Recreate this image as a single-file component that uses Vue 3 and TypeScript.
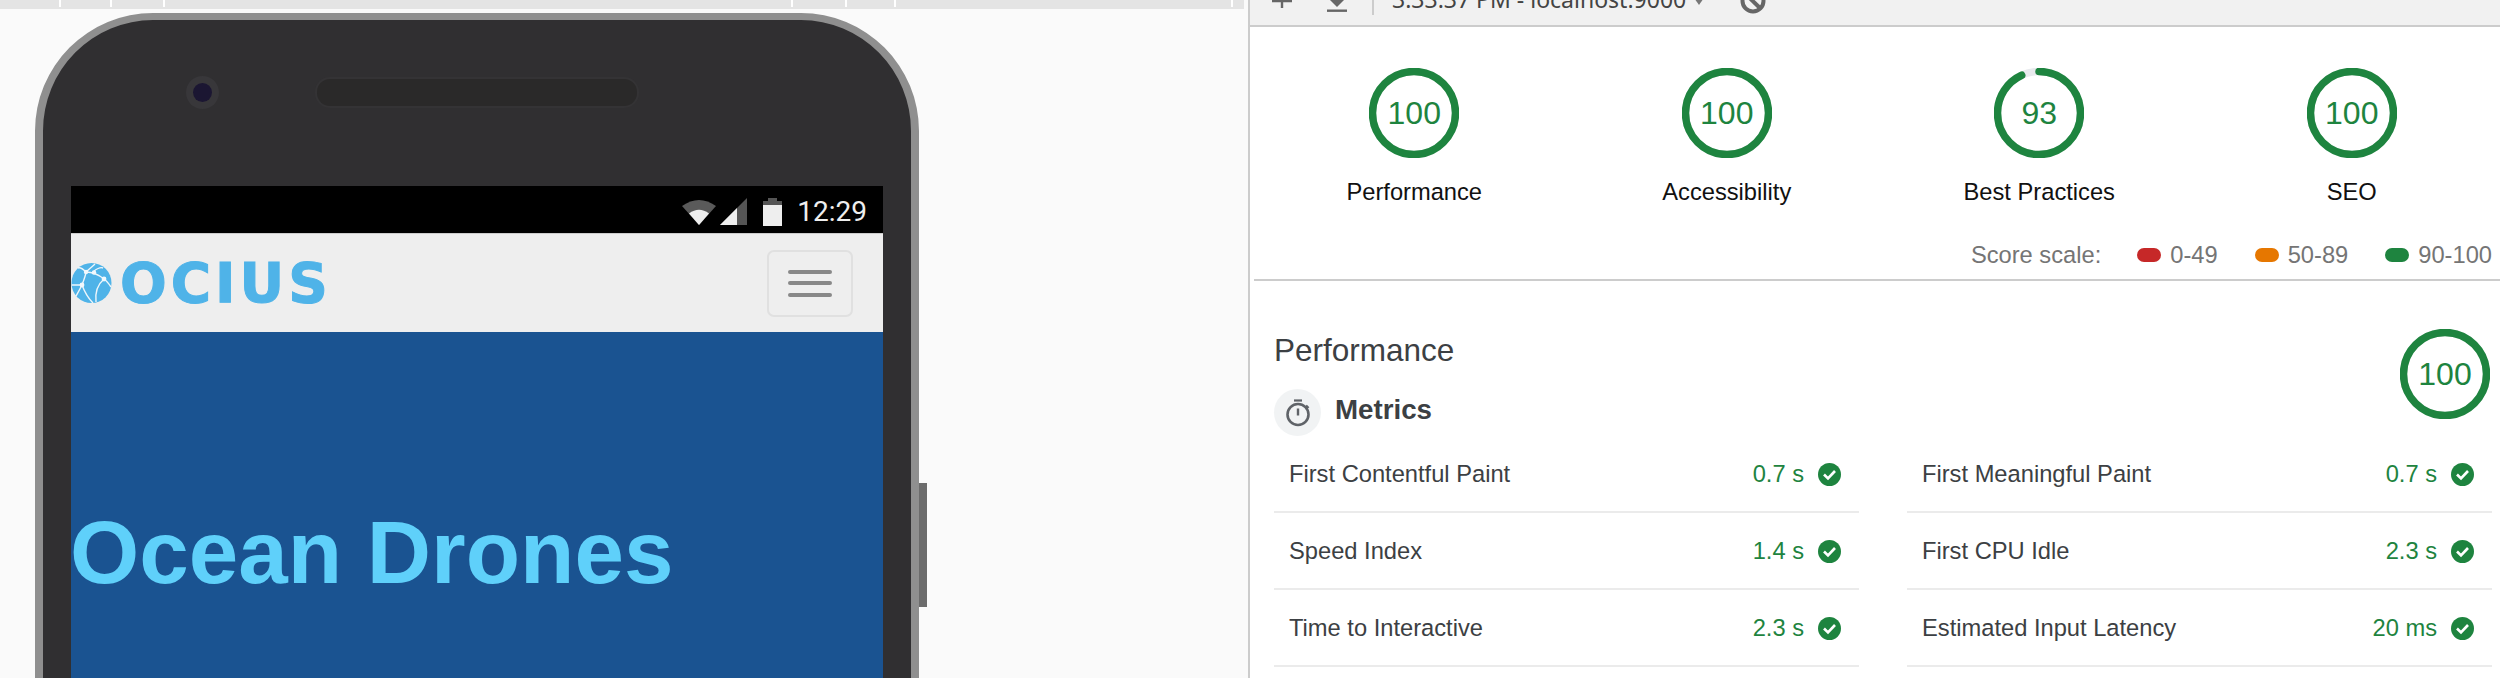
<script setup lang="ts">
interface Gauge {
  label: string
  score: number
}

interface Metric {
  label: string
  value: string
}

const tickGaps = [59, 49, 51, 626, 52, 47, 335]

const gauges: Gauge[] = [
  { label: 'Performance', score: 100 },
  { label: 'Accessibility', score: 100 },
  { label: 'Best Practices', score: 93 },
  { label: 'SEO', score: 100 },
]

const scale = [
  { label: '0-49', tone: 'fail' },
  { label: '50-89', tone: 'average' },
  { label: '90-100', tone: 'pass' },
]

const metrics: Metric[] = [
  { label: 'First Contentful Paint', value: '0.7 s' },
  { label: 'First Meaningful Paint', value: '0.7 s' },
  { label: 'Speed Index', value: '1.4 s' },
  { label: 'First CPU Idle', value: '2.3 s' },
  { label: 'Time to Interactive', value: '2.3 s' },
  { label: 'Estimated Input Latency', value: '20 ms' },
]

const circumference = 2 * Math.PI * 41.5

function dash(score: number) {
  return `${(score / 100) * circumference} ${circumference}`
}
</script>

<template>
  <div class="page">
    <section class="device-pane">
      <div class="ruler">
        <span v-for="(gap, i) in tickGaps" :key="i" class="tick" :style="{ marginLeft: gap + 'px' }"></span>
      </div>
      <div class="phone">
        <div class="phone-head">
          <span class="camera"><span class="lens"></span></span>
          <span class="speaker"></span>
        </div>
        <span class="side-button"></span>
        <div class="screen">
          <div class="status-bar">
            <svg class="wifi" width="34" height="27" viewBox="0 0 34 27">
              <path d="M17 27 L0 8 Q17 -4 34 8 Z" fill="#5a5a5a" />
              <path d="M17 27 L7 15.5 Q17 8 27 15.5 Z" fill="#eee" />
            </svg>
            <svg class="signal" width="27" height="27" viewBox="0 0 27 27">
              <path d="M27 0 V27 H0 Z" fill="#555" />
              <path d="M17 10 V27 H0 Z" fill="#eee" />
            </svg>
            <svg class="battery" width="19" height="28" viewBox="0 0 19 28">
              <path d="M5 0 H14 V3 H19 V8 H0 V3 H5 Z" fill="#555" />
              <rect y="7" width="19" height="21" fill="#eee" />
            </svg>
            <span class="clock">12:29</span>
          </div>
          <nav class="navbar">
            <div class="brand">
              <svg width="41" height="40" viewBox="0 0 41 40">
                <circle cx="20.5" cy="20" r="20" fill="#4fb3e8" />
                <g fill="none" stroke="#eef6fb" stroke-width="1.4">
                  <path d="M1 22 C8 22 11 22 11 22 C14 14 15 10 15 9 C22 9 28 12 33 16" />
                  <path d="M15 9 C11 5 9 4 7 5" />
                  <path d="M15 9 C18 6 22 3 24 1" />
                  <path d="M11 22 C14 30 18 36 22 40" />
                  <path d="M33 16 C26 22 24 30 25 39" />
                  <path d="M33 16 C36 18 38 21 40 24" />
                  <path d="M11 22 C8 28 6 31 5 33" />
                  <path d="M23 8 C27 5 30 4 32 5" />
                </g>
                <circle cx="15" cy="9" r="2.2" fill="#f2f8fc" />
                <circle cx="23" cy="9.5" r="2.2" fill="#f2f8fc" />
                <circle cx="33" cy="16" r="2.4" fill="#f2f8fc" />
                <circle cx="11" cy="22" r="2.4" fill="#f2f8fc" />
              </svg>
              <span class="wordmark">OCIUS</span>
            </div>
            <button class="toggler" type="button">
              <span></span>
              <span></span>
              <span></span>
            </button>
          </nav>
          <div class="hero">
            <h1>Ocean Drones</h1>
          </div>
        </div>
      </div>
    </section>

    <section class="report-pane">
      <header class="toolbar">
        <svg class="tool-plus" width="20" height="25" viewBox="0 0 20 25">
          <path d="M10 -8 V8 M0 1 H20" stroke="#666" stroke-width="2.4" fill="none" />
        </svg>
        <svg class="tool-save" width="20" height="25" viewBox="0 0 20 25">
          <path d="M3 0 H17 L10 7 Z" fill="#666" />
          <rect y="9.5" width="20" height="2.4" fill="#666" />
        </svg>
        <span class="tool-sep"></span>
        <span class="tool-title">3:33:37 PM - localhost:9000</span>
        <svg class="tool-caret" width="10" height="25" viewBox="0 0 10 25">
          <path d="M1.5 0 H8.5 L5 5 Z" fill="#777" />
        </svg>
        <svg class="tool-block" width="26" height="25" viewBox="0 0 26 25">
          <circle cx="13" cy="1" r="10.5" fill="none" stroke="#666" stroke-width="4" />
          <path d="M5.5 -6 L20.5 8.5" stroke="#666" stroke-width="4" />
        </svg>
      </header>

      <div class="gauges">
        <div v-for="gauge in gauges" :key="gauge.label" class="gauge">
          <div class="ring">
            <svg width="90" height="90" viewBox="0 0 90 90">
              <circle class="ring-track" cx="45" cy="45" r="41.5" />
              <circle class="ring-arc" cx="45" cy="45" r="41.5" :stroke-dasharray="dash(gauge.score)" />
            </svg>
            <span class="ring-score">{{ gauge.score }}</span>
          </div>
          <div class="gauge-label">{{ gauge.label }}</div>
        </div>
      </div>

      <div class="scale">
        <span class="scale-title">Score scale:</span>
        <span v-for="item in scale" :key="item.label" class="scale-item">
          <i class="pill" :class="item.tone"></i>{{ item.label }}
        </span>
      </div>

      <div class="category">
        <div class="category-head">
          <div>
            <h2>Performance</h2>
            <div class="metrics-title">
              <span class="timer">
                <svg width="26" height="28" viewBox="0 0 26 28">
                  <path d="M9 1.5 H17" stroke="#5f6368" stroke-width="2.2" />
                  <circle cx="13" cy="15.5" r="10.5" fill="none" stroke="#5f6368" stroke-width="2.6" />
                  <path d="M13 9.5 V16.5 M21 6.5 L23.5 9" stroke="#5f6368" stroke-width="2.4" />
                </svg>
              </span>
              <h3>Metrics</h3>
            </div>
          </div>
          <div class="ring">
            <svg width="90" height="90" viewBox="0 0 90 90">
              <circle class="ring-track" cx="45" cy="45" r="41.5" />
              <circle class="ring-arc" cx="45" cy="45" r="41.5" :stroke-dasharray="dash(100)" />
            </svg>
            <span class="ring-score">100</span>
          </div>
        </div>

        <div class="metric-grid">
          <div v-for="metric in metrics" :key="metric.label" class="metric">
            <span class="metric-label">{{ metric.label }}</span>
            <span class="metric-value">{{ metric.value }}</span>
            <svg width="23" height="23" viewBox="0 0 23 23">
              <circle cx="11.5" cy="11.5" r="11.5" fill="#1e843f" />
              <path d="M6 11.5 L10 15.5 L17 8" fill="none" stroke="#fff" stroke-width="2.6" />
            </svg>
          </div>
        </div>
      </div>
    </section>
  </div>
</template>

<style scoped>
.page {
  display: flex;
  width: 2500px;
  height: 678px;
  overflow: hidden;
  font-family: "Liberation Sans", Arial, sans-serif;
  background: #fff;
}

/* device side */
.device-pane {
  flex: 0 0 1248px;
  background: #fafafa;
  overflow: hidden;
}

.ruler {
  display: flex;
  width: 1244px;
  height: 9px;
  background: #e4e4e4;
}

.tick {
  width: 2px;
  height: 7px;
  background: #fff;
}

.phone {
  position: relative;
  box-sizing: border-box;
  width: 884px;
  height: 900px;
  margin: 4px 0 0 35px;
  padding: 0 28px;
  background: #302f31;
  border: 8px solid #8f8f8f;
  border-top-width: 7px;
  border-radius: 118px;
}

.phone-head {
  display: flex;
  align-items: center;
  gap: 98px;
  box-sizing: border-box;
  height: 166px;
  padding: 0 0 22px 115px;
}

.camera {
  display: flex;
  align-items: center;
  justify-content: center;
  width: 33px;
  height: 33px;
  border-radius: 50%;
  background: #38373a;
}

.lens {
  width: 19px;
  height: 19px;
  border-radius: 50%;
  background: #1b1632;
}

.speaker {
  width: 320px;
  height: 27px;
  border-radius: 13px;
  background: #2a2929;
  box-shadow: 0 0 0 2px #343335;
}

.side-button {
  position: absolute;
  left: 876px;
  top: 463px;
  width: 8px;
  height: 124px;
  background: #6c6c6c;
}

.screen {
  display: flex;
  flex-direction: column;
  height: 700px;
}

.status-bar {
  display: flex;
  align-items: center;
  justify-content: flex-end;
  box-sizing: border-box;
  height: 47px;
  padding: 4px 16px 0 0;
  background: #000;
}

.signal {
  margin-left: 4px;
}

.battery {
  margin-left: 16px;
}

.clock {
  margin-left: 15px;
  font-family: Roboto, sans-serif;
  font-size: 28px;
  color: #eee;
}

.navbar {
  display: flex;
  align-items: center;
  justify-content: space-between;
  box-sizing: border-box;
  height: 99px;
  padding-right: 30px;
  background: #eee;
  border-top: 1px solid #ccc;
}

.brand {
  display: flex;
  align-items: center;
  gap: 8px;
}

.wordmark {
  font-family: "DejaVu Sans", sans-serif;
  font-size: 55px;
  line-height: 40px;
  font-weight: 700;
  letter-spacing: 4px;
  color: #4fb3e8;
  -webkit-text-stroke: 1px #4fb3e8;
}

.toggler {
  display: flex;
  flex-direction: column;
  align-items: center;
  justify-content: center;
  gap: 7.5px;
  width: 86px;
  height: 67px;
  padding: 0;
  background: transparent;
  border: 2px solid #e0e0e0;
  border-radius: 7px;
}

.toggler span {
  width: 44px;
  height: 4px;
  border-radius: 2px;
  background: #888;
}

.hero {
  flex: 1;
  padding-top: 170px;
  background: #1a5391;
}

.hero h1 {
  margin: 0 0 0 -1px;
  font-size: 89px;
  line-height: 100px;
  font-weight: 700;
  color: #5fd0fa;
}

/* report side */
.report-pane {
  flex: 1;
  min-width: 0;
  border-left: 2px solid #ccc;
  overflow: hidden;
}

.toolbar {
  display: flex;
  align-items: flex-start;
  height: 25px;
  padding-left: 22px;
  background: #f1f1f1;
  border-bottom: 2px solid #ccc;
  overflow: hidden;
}

.tool-save {
  margin-left: 35px;
}

.tool-sep {
  width: 2px;
  height: 15px;
  margin-left: 25px;
  background: #ccc;
}

.tool-title {
  margin: -16px 0 0 18px;
  font-family: "Noto Sans", sans-serif;
  font-size: 23px;
  line-height: 30px;
  color: #444;
  white-space: nowrap;
}

.tool-caret {
  margin-left: 8px;
}

.tool-block {
  margin-left: 36px;
}

.gauges {
  display: grid;
  grid-template-columns: repeat(4, 312.5px);
  padding: 41px 0 0 8px;
}

.gauge {
  display: flex;
  flex-direction: column;
  align-items: center;
}

.ring {
  position: relative;
  width: 90px;
  height: 90px;
  flex: none;
}

.ring svg {
  display: block;
  transform: rotate(-90deg);
}

.ring-track,
.ring-arc {
  fill: none;
  stroke-width: 7.5;
}

.ring-track {
  stroke: #e8eaed;
}

.ring-arc {
  stroke: #1e843f;
  stroke-linecap: round;
}

.ring-score {
  position: absolute;
  inset: 0;
  display: flex;
  align-items: center;
  justify-content: center;
  font-size: 32px;
  color: #1e843f;
}

.gauge-label {
  margin-top: 20px;
  font-size: 23.7px;
  line-height: 28px;
  color: #111;
}

.scale {
  display: flex;
  align-items: center;
  justify-content: flex-end;
  height: 28px;
  margin-top: 35px;
  padding-right: 8px;
  font-size: 23.7px;
  line-height: 28px;
  color: #757575;
}

.scale-title {
  margin-right: 36px;
}

.scale-item {
  display: flex;
  align-items: center;
  margin-left: 37px;
}

.scale-title + .scale-item {
  margin-left: 0;
}

.pill {
  width: 24px;
  height: 14px;
  margin-right: 9px;
  border-radius: 7px;
}

.pill.fail {
  background: #c62828;
}

.pill.average {
  background: #e67700;
}

.pill.pass {
  background: #1e843f;
}

.category {
  margin: 10px 0 0 4px;
  padding: 48px 8px 0 20px;
  border-top: 2px solid #ccc;
}

.category-head {
  display: flex;
  justify-content: space-between;
  height: 108px;
  padding-right: 2px;
}

.category-head h2 {
  margin: 1px 0 0;
  font-size: 31.5px;
  line-height: 40px;
  font-weight: 400;
  color: #3c4043;
}

.metrics-title {
  display: flex;
  align-items: center;
  gap: 14px;
  margin-top: 19px;
}

.metrics-title h3 {
  margin: -6px 0 0;
  font-size: 27.7px;
  line-height: 34px;
  font-weight: 700;
  color: #3c4043;
}

.timer {
  display: flex;
  align-items: center;
  justify-content: center;
  width: 47px;
  height: 47px;
  border-radius: 50%;
  background: #f1f3f4;
}

.metric-grid {
  display: grid;
  grid-template-columns: 585px 585px;
  column-gap: 48px;
  margin-top: -1px;
}

.metric {
  display: flex;
  align-items: center;
  box-sizing: border-box;
  height: 77px;
  padding: 2px 18px 0 15px;
  border-bottom: 2px solid #ebebeb;
  font-size: 23.7px;
}

.metric-label {
  flex: 1;
  color: #3c4043;
}

.metric-value {
  margin-right: 14px;
  color: #1e843f;
}
</style>

<style>
body {
  margin: 0;
}
</style>
